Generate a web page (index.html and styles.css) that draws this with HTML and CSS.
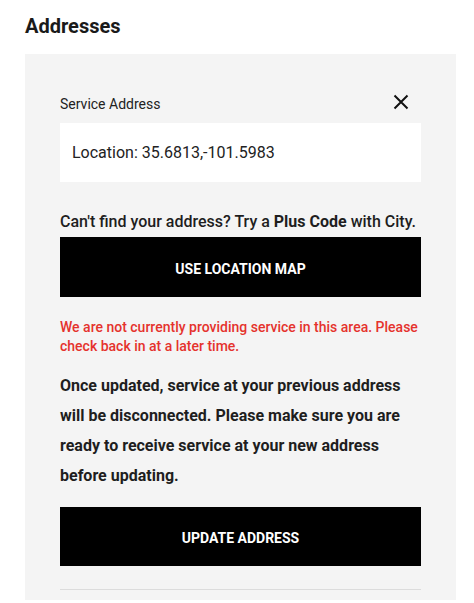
FILE: index.html
```html
<!DOCTYPE html>
<html lang="en">
<head>
  <meta charset="UTF-8">
  <title>Addresses</title>
  <link rel="stylesheet" href="styles.css">
</head>
<body>

  <h2 class="page-title">Addresses</h2>

  <div class="panel">
    <!-- Service address field -->
    <div class="field-head">
      <span class="field-label">Service Address</span>
      <button class="close-btn" aria-label="Close">
        <svg width="16" height="16" viewBox="0 0 16 16">
          <path d="M1.5 1.5 L14.5 14.5 M14.5 1.5 L1.5 14.5" stroke="#111" stroke-width="2" fill="none"/>
        </svg>
      </button>
    </div>
    <div class="address-box">Location: 35.6813,-101.5983</div>

    <p class="hint">Can't find your address? Try a <b>Plus Code</b> with City.</p>
    <button class="black-btn">USE LOCATION MAP</button>

    <p class="error">We are not currently providing service in this area. Please check back in at a later time.</p>

    <p class="notice">Once updated, service at your previous address will be disconnected. Please make sure you are ready to receive service at your new address before updating.</p>

    <button class="black-btn update-btn">UPDATE ADDRESS</button>

    <hr class="divider">
  </div>

</body>
</html>
```

FILE: styles.css
```css
body {
  margin: 0;
  padding: 0 18px 0 25px;
  font-family: Roboto, 'Noto Sans', sans-serif;
  color: #1e1e1e;
  background: #fff;
}

.page-title {
  font-size: 20px;
  font-weight: 700;
  line-height: 24px;
  margin: 14px 0 16px;
  color: #1a1a1a;
}

.panel {
  background-color: #f4f4f4;
  padding: 36px 35px 10px;
}

.field-head {
  display: flex;
  justify-content: space-between;
  align-items: center;
  height: 24px;
}

.field-label {
  font-size: 14px;
  color: #222;
  padding-top: 4px;
}

.close-btn {
  background: none;
  border: none;
  padding: 0;
  margin-right: 12px;
  width: 16px;
  height: 16px;
  cursor: pointer;
}

.close-btn svg {
  display: block;
}

.address-box {
  background-color: #fff;
  margin-top: 9px;
  height: 59px;
  padding: 0 12px;
  display: flex;
  align-items: center;
  font-size: 16px;
  color: #222;
}

.hint {
  margin: 28px 0 0;
  font-size: 16px;
  font-weight: 500;
  line-height: 24px;
  color: #1e1e1e;
}

.hint b {
  font-weight: 700;
}

.black-btn {
  display: block;
  width: 100%;
  height: 60px;
  margin-top: 3px;
  padding: 3px 0 0;
  background-color: #000;
  color: #fff;
  border: none;
  font-family: Roboto, 'Noto Sans', sans-serif;
  font-size: 14px;
  font-weight: 700;
  cursor: pointer;
}

.error {
  margin: 21px 0 0;
  font-size: 14px;
  font-weight: 500;
  line-height: 19px;
  color: #e5322d;
}

.notice {
  margin: 15px 0 0;
  font-size: 16px;
  font-weight: 700;
  line-height: 30px;
  color: #1e1e1e;
}

.update-btn {
  margin-top: 16px;
  height: 59px;
}

.divider {
  margin: 23px 0 0;
  border: none;
  border-top: 1px solid #dcdcdc;
}
```
